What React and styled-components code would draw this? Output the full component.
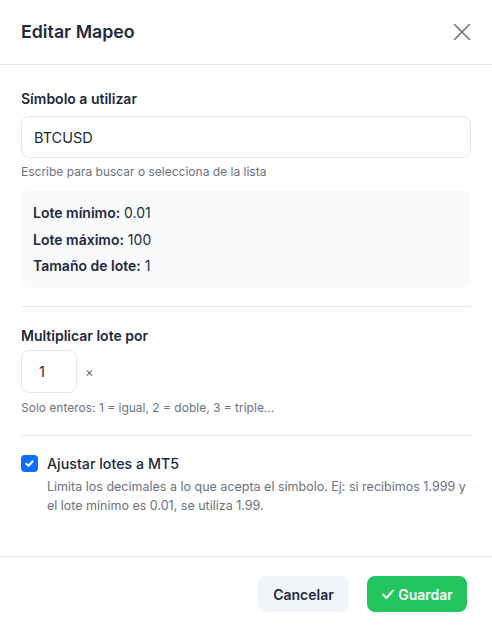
import React from "react";
import styled, { createGlobalStyle } from "styled-components";

const Global = createGlobalStyle`
  html, body { margin: 0; padding: 0; background: #ffffff; }
  body { font-family: Inter, "Noto Sans", sans-serif; color: #1e293b; -webkit-font-smoothing: antialiased; }
  * { box-sizing: border-box; }
`;

const Modal = styled.div`
  width: 492px;
  height: 630px;
  background: #fff;
  border-radius: 8px;
  display: flex;
  flex-direction: column;
`;

const Header = styled.div`
  height: 65px;
  flex: none;
  display: flex;
  align-items: center;
  justify-content: space-between;
  padding: 0 21px 1px;
  border-bottom: 1px solid #e5e7eb;
`;

const Title = styled.h2`
  margin: 0;
  font-size: 17.8px;
  font-weight: 600;
  color: #1e293b;
  line-height: 24px;
`;

const CloseBtn = styled.button`
  border: 0;
  background: none;
  padding: 0;
  width: 18px;
  height: 18px;
  display: flex;
  color: #6b7280;
  cursor: pointer;
`;

const Body = styled.div`
  flex: 1;
  padding: 24px 21px 0;
  display: flex;
  flex-direction: column;
`;

const Label = styled.div`
  font-size: 14px;
  font-weight: 600;
  line-height: 20px;
  color: #1e293b;
  margin-bottom: ${(p) => p.$mb || 7}px;
`;

const TextInput = styled.input`
  width: 100%;
  height: 42px;
  border: 1px solid #e2e8f0;
  border-radius: 8px;
  padding: 0 12px;
  font-family: inherit;
  font-size: 14.5px;
  color: #1e293b;
  outline: none;
`;

const SmallInput = styled(TextInput)`
  width: 56px;
  height: 43px;
  padding: 0 17px;
`;

const Help = styled.div`
  font-size: 12px;
  line-height: 16px;
  color: #6b7280;
  margin-top: ${(p) => p.$mt || 6}px;
`;

const InfoBox = styled.div`
  margin-top: 10px;
  background: #f8fafc;
  border-radius: 8px;
  padding: 13px 12px 12px;
  display: flex;
  flex-direction: column;
  gap: 6.5px;
`;

const InfoRow = styled.div`
  font-size: 14px;
  line-height: 20px;
  color: #1e293b;
  b { font-weight: 600; }
`;

const Divider = styled.hr`
  border: 0;
  border-top: 1px solid #e5e7eb;
  margin: ${(p) => p.$m};
`;

const InputRow = styled.div`
  display: flex;
  align-items: center;
  gap: 8px;
`;

const Times = styled.span`
  font-size: 13px;
  color: #6b7280;
`;

const CheckRow = styled.label`
  display: flex;
  align-items: flex-start;
  gap: 9px;
`;

const CheckBox = styled.span`
  width: 17px;
  height: 17px;
  border-radius: 4px;
  background: #0d6efd;
  display: flex;
  align-items: center;
  justify-content: center;
  flex: none;
`;

const CheckText = styled.div`
  display: flex;
  flex-direction: column;
  margin-top: -1px;
`;

const CheckTitle = styled.div`
  font-size: 14.25px;
  font-weight: 500;
  line-height: 20px;
  color: #1e293b;
`;

const CheckDesc = styled.div`
  font-size: 12.5px;
  line-height: 19px;
  color: #6b7280;
  margin-top: 3px;
`;

const Footer = styled.div`
  flex: none;
  height: 74px;
  border-top: 1px solid #e5e7eb;
  display: flex;
  justify-content: flex-end;
  align-items: flex-start;
  padding: 19px 25px 0 0;
  gap: 18px;
`;

const Button = styled.button`
  height: 36px;
  border: 0;
  border-radius: 8px;
  font-family: inherit;
  font-size: 14px;
  font-weight: 600;
  display: flex;
  align-items: center;
  justify-content: center;
  gap: 3px;
  cursor: pointer;
  width: ${(p) => p.$w}px;
  background: ${(p) => (p.$primary ? "#22c55e" : "#f1f5f9")};
  color: ${(p) => (p.$primary ? "#ffffff" : "#1e293b")};
`;

export default function App() {
  return (
    <>
      <Global />
      <Modal>
        <Header>
          <Title>Editar Mapeo</Title>
          <CloseBtn aria-label="Cerrar">
            <svg width="18" height="18" viewBox="0 0 18 18" fill="none" stroke="currentColor" strokeWidth="1.6" strokeLinecap="round">
              <path d="M1.5 1.5 L16.5 16.5 M16.5 1.5 L1.5 16.5" />
            </svg>
          </CloseBtn>
        </Header>
        <Body>
          <Label>Símbolo a utilizar</Label>
          <TextInput defaultValue="BTCUSD" />
          <Help>Escribe para buscar o selecciona de la lista</Help>
          <InfoBox>
            <InfoRow><b>Lote mínimo:</b> 0.01</InfoRow>
            <InfoRow><b>Lote máximo:</b> 100</InfoRow>
            <InfoRow><b>Tamaño de lote:</b> 1</InfoRow>
          </InfoBox>
          <Divider $m="18px 0 19px" />
          <Label $mb={4}>Multiplicar lote por</Label>
          <InputRow>
            <SmallInput defaultValue="1" />
            <Times>×</Times>
          </InputRow>
          <Help $mt={7}>Solo enteros: 1 = igual, 2 = doble, 3 = triple...</Help>
          <Divider $m="19px 0 19px" />
          <CheckRow>
            <CheckBox>
              <svg width="11" height="11" viewBox="0 0 12 12" fill="none" stroke="#fff" strokeWidth="2.2" strokeLinecap="round" strokeLinejoin="round">
                <path d="M2.5 6.2 L5 8.5 L9.5 3.5" />
              </svg>
            </CheckBox>
            <CheckText>
              <CheckTitle>Ajustar lotes a MT5</CheckTitle>
              <CheckDesc>
                Limita los decimales a lo que acepta el símbolo. Ej: si recibimos 1.999 y el lote mínimo es 0.01, se utiliza 1.99.
              </CheckDesc>
            </CheckText>
          </CheckRow>
        </Body>
        <Footer>
          <Button $w={91}>Cancelar</Button>
          <Button $primary $w={100}>
            <svg width="14" height="14" viewBox="0 0 14 14" fill="none" stroke="#fff" strokeWidth="2" strokeLinecap="round" strokeLinejoin="round">
              <path d="M2 7.5 L5.5 11 L12 3.5" />
            </svg>
            Guardar
          </Button>
        </Footer>
      </Modal>
    </>
  );
}
